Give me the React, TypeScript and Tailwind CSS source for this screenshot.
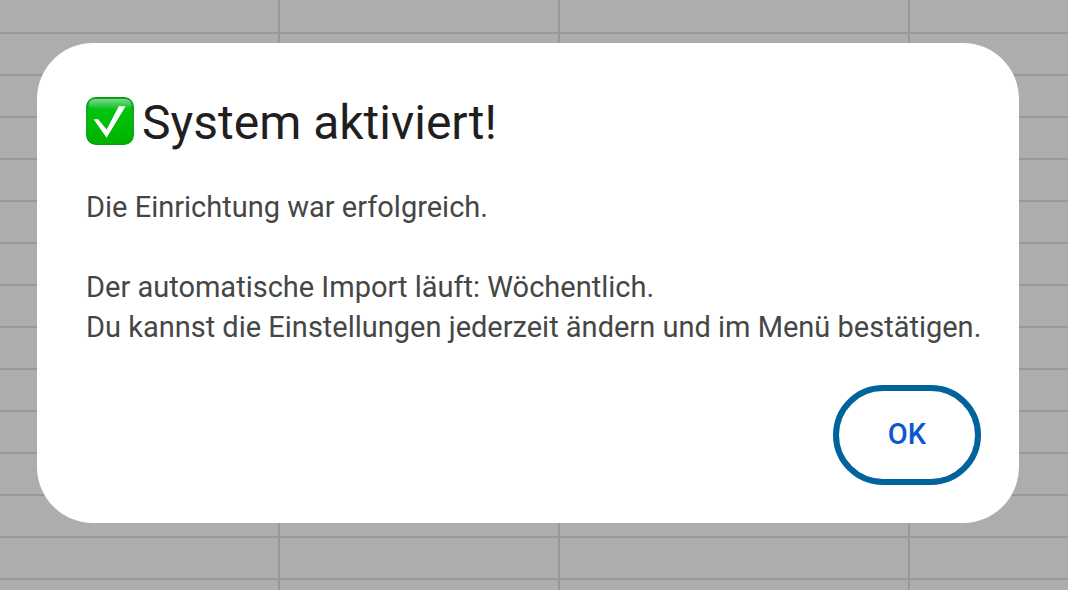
import { useId } from 'react';

const ROWS = Array.from({ length: 14 }, (_, i) => i);

function CheckEmoji() {
  const id = useId();

  return (
    <svg viewBox="0 0 48 48" className="mt-1.5 size-12 shrink-0" role="img" aria-label="Erledigt">
      <defs>
        <linearGradient id={`${id}-fill`} x1="0" y1="0" x2="0" y2="1">
          <stop offset="0" stopColor="#00b020" />
          <stop offset="0.3" stopColor="#00c40c" />
          <stop offset="1" stopColor="#00b200" />
        </linearGradient>
        <linearGradient id={`${id}-gloss`} x1="0" y1="0" x2="0" y2="1">
          <stop offset="0" stopColor="#ffffff" stopOpacity="0.5" />
          <stop offset="1" stopColor="#ffffff" stopOpacity="0" />
        </linearGradient>
      </defs>
      <rect x="0.7" y="0.7" width="46.6" height="46.6" rx="9" fill={`url(#${id}-fill)`} stroke="#0a9a18" strokeWidth="1.2" />
      <rect x="2.5" y="2" width="43" height="11" rx="7" fill={`url(#${id}-gloss)`} />
      <path d="M7.6 22.2h4.6l8.4 10.2L32.8 9.2h6.8L20.6 40.8z" fill="#ffffff" />
    </svg>
  );
}

function Sheet() {
  return (
    <div aria-hidden="true" className="fixed inset-0 flex flex-col overflow-hidden bg-[#adadad]">
      {ROWS.map((row) => (
        <div
          key={row}
          className="flex h-[42px] shrink-0 border-b-2 border-[#999999] first:h-[34px]"
        >
          <div className="w-[280px] shrink-0 border-r-2 border-[#999999]" />
          <div className="w-[280px] shrink-0 border-r-2 border-[#999999]" />
          <div className="w-[350px] shrink-0 border-r-2 border-[#999999]" />
          <div className="flex-1" />
        </div>
      ))}
      <div className="flex flex-1">
        <div className="w-[280px] shrink-0 border-r-2 border-[#999999]" />
        <div className="w-[280px] shrink-0 border-r-2 border-[#999999]" />
        <div className="w-[350px] shrink-0 border-r-2 border-[#999999]" />
      </div>
    </div>
  );
}

export default function App() {
  return (
    <div className="min-h-screen font-['Roboto',sans-serif]">
      <Sheet />

      <div className="relative pt-[43px] pr-[49px] pb-[67px] pl-[37px]">
        <div
          role="alertdialog"
          aria-modal="true"
          aria-labelledby="dialog-title"
          aria-describedby="dialog-text"
          className="flex flex-col rounded-[56px] bg-white pt-12 pr-[38px] pb-[38px] pl-[49px]"
        >
          <h1
            id="dialog-title"
            className="flex items-start gap-2 text-[48px] leading-[64px] text-[#1f1f1f]"
          >
            <CheckEmoji />
            System aktiviert!
          </h1>

          <div id="dialog-text" className="mt-8 text-[29px] leading-10 text-[#444746] lg:whitespace-nowrap">
            <p>Die Einrichtung war erfolgreich.</p>
            <p className="mt-10">
              Der automatische Import läuft: Wöchentlich.
              <br />
              Du kannst die Einstellungen jederzeit ändern und im Menü bestätigen.
            </p>
          </div>

          <div className="mt-[38px] flex justify-end">
            <button
              type="button"
              className="h-[100px] min-w-[148px] rounded-[50px] border-6 border-[#00639b] px-12 text-[29px] font-medium text-[#0b57d0]"
            >
              OK
            </button>
          </div>
        </div>
      </div>
    </div>
  );
}
